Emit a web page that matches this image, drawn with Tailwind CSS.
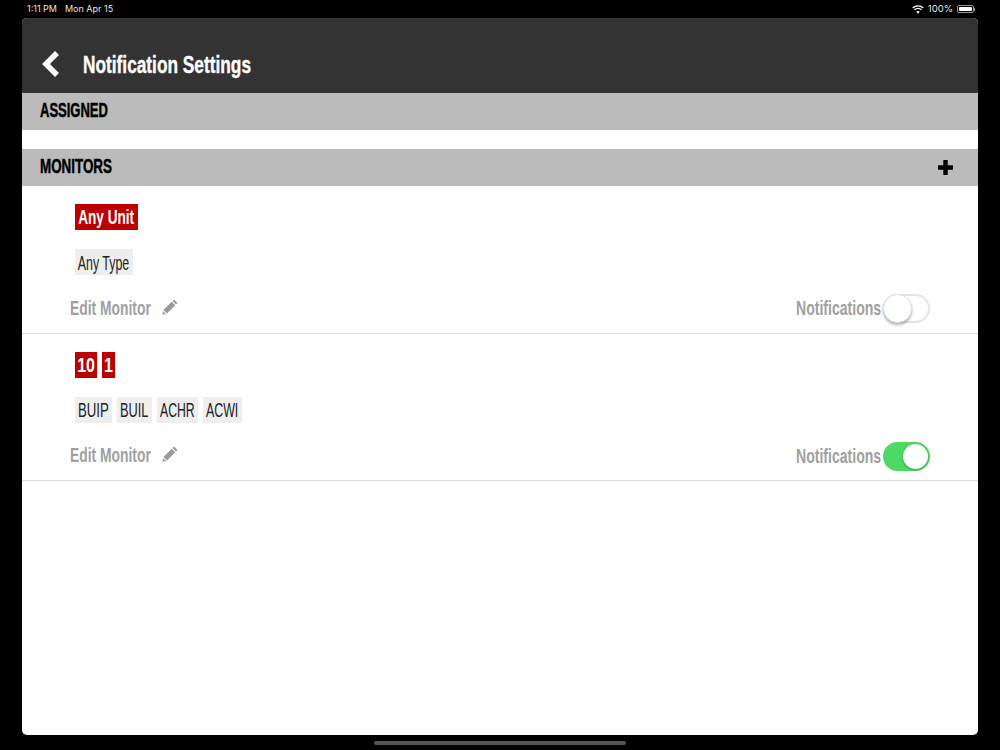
<!DOCTYPE html>
<html lang="en">
<head>
  <meta charset="UTF-8" />
  <title>Notification Settings</title>
  <script src="https://cdn.jsdelivr.net/npm/@tailwindcss/browser@4"></script>
</head>
<body class="bg-black h-[750px] w-[1000px] overflow-hidden font-['Liberation_Sans',sans-serif]">
  <!-- Status bar -->
  <div class="h-[18px] flex items-center justify-between pl-[27px] pr-[25px] text-[9px] text-[#e5e5e5] font-['Inter',sans-serif]">
    <div class="flex gap-[8px]"><span>1:11 PM</span><span>Mon Apr 15</span></div>
    <div class="flex items-center gap-[4px]">
      <svg width="12" height="9" viewBox="0 0 11 8" fill="none" stroke="#fff"><path d="M.7 2.6a7 7 0 0 1 9.600 0" stroke-width="1.200"/><path d="M2.300 4.300a4.700 4.700 0 0 1 6.400 0" stroke-width="1.200"/><path d="M5.500 7.800 3.900 6a2.400 2.400 0 0 1 3.200 0z" fill="#fff" stroke="none"/></svg>
      <span class="text-[9.5px]">100%</span>
      <div class="flex items-center">
        <div class="w-[17px] h-[8px] border border-[#999] rounded-[2px] p-[1px]"><div class="bg-white h-full rounded-[1px]"></div></div>
        <div class="w-[1px] h-[3px] bg-[#999]"></div>
      </div>
    </div>
  </div>

  <div class="w-[956px] h-[717px] ml-[22px] bg-white rounded-[5px] overflow-hidden">
    <!-- Header -->
    <div class="h-[75px] bg-[#333333] flex items-end pb-[12px] pl-[19px]">
      <svg class="mb-[4px] shrink-0" width="19" height="26" viewBox="0 0 19 26" fill="none" stroke="#fff" stroke-width="5.500"><path d="M16 2 5 13l11 11"/></svg>
      <div class="w-[190px] ml-[23px] h-[32px]"><h1 class="text-[24px] leading-[32px] font-bold text-white origin-left scale-x-[.72] whitespace-nowrap [-webkit-text-stroke:0.4px_#fff]">Notification Settings</h1></div>
    </div>

    <div class="h-[37px] bg-[#bbbbbb] flex items-center pl-[18px] pb-[3px]">
      <span class="text-[20px] font-bold text-black origin-left scale-x-[.65] [-webkit-text-stroke:0.5px_#000]">ASSIGNED</span>
    </div>
    <div class="h-[19px]"></div>
    <div class="h-[37px] bg-[#bbbbbb] flex items-center justify-between pl-[18px] pr-[25px]">
      <span class="text-[20px] font-bold text-black origin-left scale-x-[.67] pb-[3px] [-webkit-text-stroke:0.5px_#000]">MONITORS</span>
      <svg width="15" height="15" viewBox="0 0 15 15" fill="#000"><path d="M5.300.5Q5.300 0 5.800 0h3.400q.5 0 .5.500v4.800h4.800q.5 0 .5.500v3.400q0 .5-.5.500H9.700v4.800q0 .5-.5.500H5.800q-.5 0-.5-.5V9.700H.5Q0 9.700 0 9.200V5.800q0-.5.500-.5h4.800z"/></svg>
    </div>

    <!-- Monitor 1 -->
    <div class="h-[148px] border-b border-[#dddddd] pt-[18px] pl-[53px] pr-[48px]">
      <div class="flex gap-[5px]">
        <span class="w-[63px] h-[26px] flex justify-center bg-[#bb0000] text-white font-bold text-[20px] leading-[27px]"><span class="scale-x-[.68] whitespace-nowrap">Any Unit</span></span>
      </div>
      <div class="flex gap-[5px] mt-[19px]">
        <span class="w-[58px] h-[26px] flex justify-center bg-[#eeeeee] text-[#222222] text-[20px] leading-[28px]"><span class="scale-x-[.62] whitespace-nowrap">Any Type</span></span>
      </div>
      <div class="flex items-center justify-between mt-[18px] -ml-[5px]">
        <div class="flex items-center">
          <div class="w-[92px] h-[26px]"><div class="text-[21px] leading-[26px] font-bold text-[#a0a0a0] origin-left scale-x-[.66] whitespace-nowrap">Edit Monitor</div></div>
          <svg class="-mt-[2px]" width="16" height="16" viewBox="0 0 16 16" fill="#999999"><path d="M12 .5 15.500 4 14 5.500 10.500 2zM9.700 2.800 13.200 6.300 5 14.500 1.500 11zM1 12l3 3-3.500.7z"/></svg>
        </div>
        <div class="flex items-center">
          <span class="text-[21px] leading-[26px] font-bold text-[#a0a0a0] mr-[2px] origin-right scale-x-[.67] whitespace-nowrap">Notifications</span>
          <div class="w-[47px] h-[29px] rounded-full bg-white border-2 border-[#e5e5e5] relative translate-y-[1px]">
            <div class="absolute -left-[2px] -top-[2px] w-[29px] h-[29px] rounded-full bg-white border border-[#e0e0e0] shadow-[0_2px_3px_rgba(0,0,0,0.3)]"></div>
          </div>
        </div>
      </div>
    </div>

    <!-- Monitor 2 -->
    <div class="h-[147px] border-b border-[#dddddd] pt-[18px] pl-[53px] pr-[48px]">
      <div class="flex gap-[5px]">
        <span class="w-[22px] h-[26px] flex justify-center bg-[#bb0000] text-white font-bold text-[20px] leading-[27px]"><span class="scale-x-[.8] whitespace-nowrap">10</span></span>
        <span class="w-[13px] h-[26px] flex justify-center bg-[#bb0000] text-white font-bold text-[20px] leading-[27px]"><span class="scale-x-[.8] whitespace-nowrap">1</span></span>
      </div>
      <div class="flex gap-[5px] mt-[19px]">
        <span class="w-[37px] h-[26px] flex justify-center bg-[#eeeeee] text-[#222222] text-[20px] leading-[26px]"><span class="scale-x-[.66] whitespace-nowrap">BUIP</span></span>
        <span class="w-[35px] h-[26px] flex justify-center bg-[#eeeeee] text-[#222222] text-[20px] leading-[26px]"><span class="scale-x-[.64] whitespace-nowrap">BUIL</span></span>
        <span class="w-[41px] h-[26px] flex justify-center bg-[#eeeeee] text-[#222222] text-[20px] leading-[26px]"><span class="scale-x-[.61] whitespace-nowrap">ACHR</span></span>
        <span class="w-[39px] h-[26px] flex justify-center bg-[#eeeeee] text-[#222222] text-[20px] leading-[26px]"><span class="scale-x-[.62] whitespace-nowrap">ACWI</span></span>
      </div>
      <div class="flex items-center justify-between mt-[18px] -ml-[5px]">
        <div class="flex items-center -mt-[2px]">
          <div class="w-[92px] h-[26px]"><div class="text-[21px] leading-[26px] font-bold text-[#a0a0a0] origin-left scale-x-[.66] whitespace-nowrap">Edit Monitor</div></div>
          <svg class="-mt-[2px]" width="16" height="16" viewBox="0 0 16 16" fill="#999999"><path d="M12 .5 15.500 4 14 5.500 10.500 2zM9.700 2.800 13.200 6.300 5 14.500 1.500 11zM1 12l3 3-3.500.7z"/></svg>
        </div>
        <div class="flex items-center">
          <span class="text-[21px] leading-[26px] font-bold text-[#a0a0a0] mr-[2px] origin-right scale-x-[.67] whitespace-nowrap">Notifications</span>
          <div class="w-[47px] h-[29px] rounded-full bg-[#4cd964] relative translate-y-[1px]">
            <div class="absolute right-[2px] top-[2px] w-[25px] h-[25px] rounded-full bg-white shadow-[0_1px_3px_rgba(0,0,0,0.25)]"></div>
          </div>
        </div>
      </div>
    </div>
  </div>

  <!-- Home indicator -->
  <div class="flex justify-center mt-[6px]"><div class="w-[252px] h-[4px] rounded-full bg-[#555555]"></div></div>
</body>
</html>
